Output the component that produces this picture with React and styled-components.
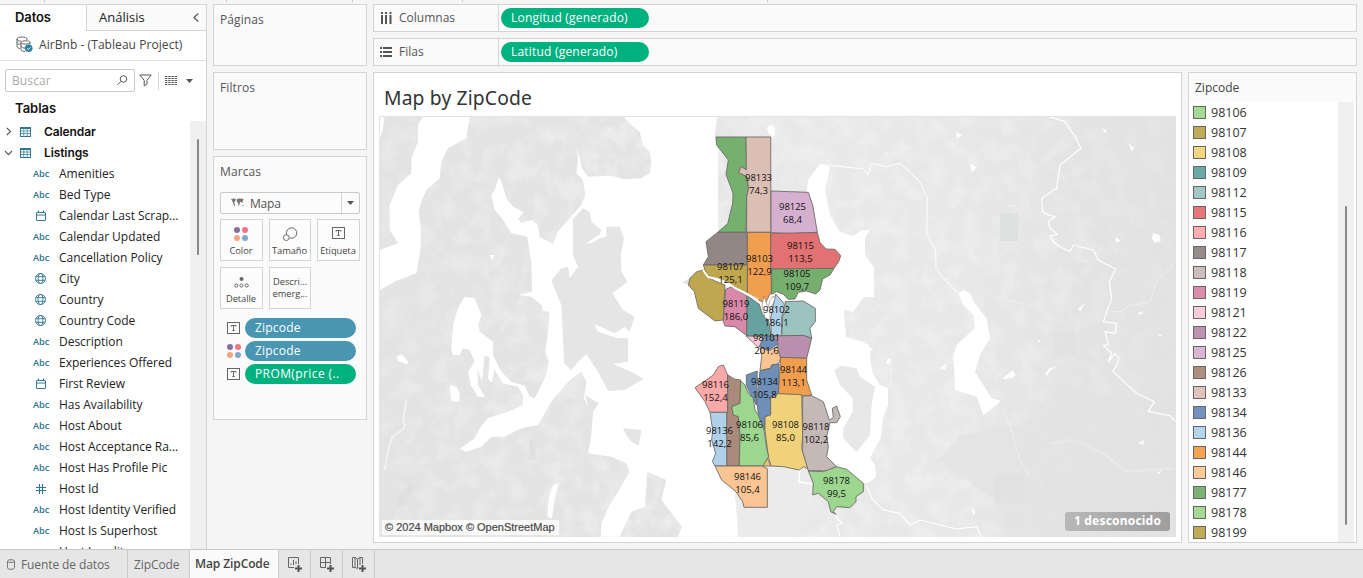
import React from 'react';
import styled, { createGlobalStyle, css } from 'styled-components';

const Global = createGlobalStyle`
  * { box-sizing: border-box; }
  html, body { margin: 0; padding: 0; overflow: hidden; }
  body { font-family: "Open Sans", "Noto Sans", sans-serif; font-size: 12px; color: #333; background: #f5f5f5; }
  svg { display: block; flex: none; }
`;

const LINE = '#d4d4d4';

const Window = styled.div`
  width: 1363px; height: 578px; display: flex; flex-direction: column;
  background: #f5f5f5; overflow: hidden; white-space: nowrap;
`;
const TopStrip = styled.div`
  height: 4px; flex: none; display: flex;
`;
const StripTick = styled.i`
  width: 1px; height: 2px; background: #ccc; margin-left: ${p => p.$gap}px;
`;
const Workspace = styled.div`
  flex: 1; min-height: 0; display: flex;
`;

/* data pane */
const DataPane = styled.aside`
  width: 207px; flex: none; background: #fff; display: flex; flex-direction: column;
  border-top: 1px solid ${LINE}; border-right: 1px solid ${LINE}; overflow: hidden;
`;
const PaneTabs = styled.div`height: 26px; flex: none; display: flex;`;
const PaneTab = styled.div`
  line-height: 25px; font-size: 13px;
  ${p => p.$active ? css`
    width: 86px; padding-left: 15px; font-family: Inter, sans-serif; font-weight: 600; color: #111; letter-spacing: -0.1px;
  ` : css`
    flex: 1; padding: 0 7px 0 12px; background: #fafafa; border-left: 1px solid ${LINE};
    border-bottom: 1px solid ${LINE}; display: flex; justify-content: space-between; align-items: center; color: #222;
  `}
`;
const Source = styled.div`
  height: 30px; flex: none; border-bottom: 1px solid #e2e2e2; display: flex; align-items: center;
  gap: 6px; padding: 0 0 2px 16px; font-size: 12px; color: #444; letter-spacing: 0.06px;
`;
const SearchRow = styled.div`
  height: 39px; flex: none; display: flex; align-items: center; padding: 0 0 0 5px;
`;
const SearchBox = styled.div`
  width: 130px; height: 23px; border: 1px solid #c9c9c9; border-radius: 2px; display: flex;
  align-items: center; justify-content: space-between; padding: 0 6px 0 6px; color: #aaa; font-size: 12px; letter-spacing: 0.1px;
`;
const Divider = styled.i`width: 1px; height: 18px; background: ${LINE}; margin: 0 6px;`;
const TablesTitle = styled.div`
  height: 21px; flex: none; padding-left: 15px; font: 600 13px/17px Inter, sans-serif; color: #111;
`;
const TreeArea = styled.div`flex: 1; min-height: 0; display: flex; overflow: hidden;`;
const Tree = styled.div`flex: 1; min-width: 0;`;
const TableRow = styled.div`
  height: 21px; display: flex; align-items: center; padding-left: 4px;
  font: 600 12px Inter, sans-serif; color: #111; letter-spacing: -0.1px;
`;
const Caret = styled.span`width: 16px; display: flex; flex: none;`;
const TableIconSlot = styled.span`width: 24px; display: flex; flex: none;`;
const FieldRow = styled.div`
  height: 21px; display: flex; align-items: center; color: #222; letter-spacing: -0.03px;
`;
const FieldIcon = styled.span`
  width: 59px; padding-left: 33px; flex: none; display: flex; color: #2f7691; letter-spacing: -0.1px;
  font: 600 9.3px "Open Sans", sans-serif;
`;
const Track = styled.div`
  width: ${p => p.$w}px; background: #f0f0f0; flex: none; display: flex; justify-content: center;
`;
const Thumb = styled.i`
  width: 2px; height: ${p => p.$h}px; margin-top: ${p => p.$top}px; background: #888; border-radius: 1px;
`;

/* cards */
const CardColumn = styled.div`
  width: 154px; margin-left: 6px; flex: none; display: flex; flex-direction: column; gap: 6px;
`;
const Card = styled.section`
  height: ${p => p.$h}px; border: 1px solid ${LINE}; background: #fafafa; padding: 0 6px; display: flex; flex-direction: column;
`;
const CardTitle = styled.div`line-height: 30px; height: 35px; flex: none; color: #555; font-size: 12px; letter-spacing: .1px;`;
const MarkSelect = styled.div`
  width: 140px; height: 22px; border: 1px solid #c9c9c9; border-radius: 2px; display: flex; align-items: center;
  color: #555; flex: none; padding-left: 10px; gap: 6px; background: #fcfcfc; letter-spacing: -0.2px;
`;
const SelectArrow = styled.span`
  margin-left: auto; width: 18px; height: 20px; border-left: 1px solid ${LINE}; display: flex; align-items: center; justify-content: center;
`;
const MarkGrid = styled.div`
  margin-top: 5px; display: grid; grid-template-columns: 43px 42px 43px; grid-auto-rows: 42px; gap: 6px; flex: none;
`;
const MarkButton = styled.div`
  border: 1px solid ${LINE}; background: #fcfcfc; color: #444; font-size: 9.3px; line-height: 12px; letter-spacing: -0.05px;
  display: flex; flex-direction: column; align-items: center; justify-content: ${p => p.$plain ? 'center' : 'space-between'};
  padding: ${p => p.$plain ? '0' : '7px 1px 3px 0'};
`;
const MarkPills = styled.div`display: flex; flex-direction: column; gap: 3px; padding: 9px 0 0 7px;`;
const MarkPillRow = styled.div`display: flex; align-items: center; gap: 4px; height: 20px;`;
const PillIcon = styled.span`width: 14px; display: flex; flex: none;`;
const Pill = styled.div`
  width: ${p => p.$w}px; height: 20px; border-radius: 10px; padding-left: 10px; line-height: 19px;
  background: ${p => p.$measure ? '#00b180' : '#4996b2'}; color: #fff; font-weight: 500; font-size: 12px; letter-spacing: ${p => p.$ls || 0.2}px;
`;

/* sheet */
const SheetArea = styled.main`
  width: 984px; margin-left: 6px; flex: none; display: flex; flex-direction: column; gap: 6px;
`;
const Shelf = styled.div`
  height: 28px; flex: none; border: 1px solid ${LINE}; background: #fafafa; display: flex; align-items: center;
`;
const ShelfLabel = styled.div`
  width: 125px; height: 26px; border-right: 1px solid ${LINE}; padding: 0 0 1px 6px; display: flex; align-items: center; gap: 6px;
  color: #555; margin-right: 2px; letter-spacing: 0;
`;
const ViewRow = styled.div`display: flex; gap: 6px; height: 471px; flex: none;`;
const View = styled.section`
  width: 809px; border: 1px solid ${LINE}; background: #fff; padding: 0 5px;
`;
const ViewTitle = styled.h1`
  margin: 0; height: 43px; padding-left: 5px; font: 400 19.3px/50px "Noto Sans", sans-serif; color: #333; letter-spacing: .15px;
`;
const MapBox = styled.div`width: 797px; height: 421px; position: relative; overflow: hidden;`;
const Attribution = styled.div`
  position: absolute; left: 3px; bottom: 2px; height: 15px; width: 177px; padding-left: 3px; background: rgba(255,255,255,.75);
  font: 400 11px/15px "Liberation Sans", Arial, sans-serif; color: #444; -webkit-text-stroke: .2px #555;
`;
const Unknown = styled.div`
  position: absolute; right: 6px; bottom: 6px; width: 105px; height: 19px; border-radius: 3px; text-align: center;
  background: linear-gradient(90deg, #b8b8b8, #9e9e9e); color: #fff; font: 700 12px/18px "Noto Sans", sans-serif; letter-spacing: .2px;
`;
const Legend = styled.section`
  width: 169px; border: 1px solid ${LINE}; background: #fafafa; display: flex; flex-direction: column;
`;
const LegendTitle = styled.div`height: 29px; flex: none; padding-left: 6px; line-height: 30px; color: #444;`;
const LegendBody = styled.div`flex: 1; display: flex; background: #fff; padding-right: 2px; min-height: 0;`;
const LegendList = styled.div`flex: 1;`;
const LegendItem = styled.div`
  height: 20px; display: flex; align-items: center; padding-left: 4px; gap: 5px; font-size: 12.5px; color: #333;
`;
const Swatch = styled.i`width: 13px; height: 13px; border: 1px solid #666; background: ${p => p.$c};`;

/* bottom tabs */
const SheetTabs = styled.footer`
  height: 29px; flex: none; border-top: 1px solid #c9c9c9; background: #e6e6e6; display: flex;
`;
const SheetTab = styled.div`
  width: ${p => p.$w}px; flex: none; border-right: 1px solid #c9c9c9; display: flex; align-items: center; padding: 1px 0 0 ${p => p.$pad}px;
  gap: 6px; color: #666; font-size: 12px; letter-spacing: -0.1px;
  ${p => p.$active && css`background: #fafafa; color: #444; font: 600 12px "Open Sans", sans-serif; padding-top: 0; padding-bottom: 2px;`}
`;

/* icons */
const Calendar = () => (
  <svg width="12" height="12" viewBox="0 0 12 12" style={{ marginLeft: 2 }} fill="none" stroke="#2f7691">
    <rect x="1.5" y="2.5" width="9" height="8" rx=".5" /><path d="M1.5 5H10.5M3.5 .5V3M8.5 .5V3" />
  </svg>
);
const Globe = () => (
  <svg width="13" height="13" viewBox="0 0 13 13" style={{ marginLeft: 1 }} fill="none" stroke="#2f7691" strokeWidth=".9">
    <circle cx="6.5" cy="6.5" r="5" /><ellipse cx="6.5" cy="6.5" rx="2.4" ry="5" /><path d="M1.9 4.7H11.1M1.9 8.3H11.1" />
  </svg>
);
const Hash = () => (
  <svg width="12" height="12" viewBox="0 0 12 12" style={{ marginLeft: 2 }} fill="none" stroke="#2f7691" strokeWidth="1.1">
    <path d="M4.5 1V11M7.5 1V11M1 4.5H11M1 7.5H11" />
  </svg>
);
const TableGlyph = () => (
  <svg width="11" height="10" viewBox="0 0 11 10" fill="none" stroke="#2f7691">
    <rect x=".5" y=".5" width="10" height="9" /><path d="M1 1.5H10" /><path d="M1 4H10M1 6.5H10M3.8 2V9.5M7.2 2V9.5" strokeWidth=".7" />
  </svg>
);
const LabelGlyph = () => (
  <svg width="13" height="12" viewBox="0 0 13 12" fill="none" stroke="#666">
    <rect x=".5" y=".5" width="12" height="11" /><path d="M4 4.6V3.5H9V4.6M6.5 3.5V8.5M5.3 8.5H7.7" />
  </svg>
);
const ColorGlyph = () => (
  <svg width="14" height="14" viewBox="0 0 14 14">
    <circle cx="3" cy="3" r="3" fill="#86709b" /><circle cx="11" cy="3" r="3" fill="#f77385" />
    <circle cx="3" cy="11" r="3" fill="#f5a77b" /><circle cx="11" cy="11" r="3" fill="#85a6cd" />
  </svg>
);
const SizeGlyph = () => (
  <svg width="16" height="15" viewBox="0 0 16 15" fill="none" stroke="#666">
    <path d="M4.600 7.500A5.200 5.200 0 1 1 7.800 10.900" /><circle cx="4.3" cy="10.6" r="2.9" />
  </svg>
);
const DetailGlyph = () => (
  <svg width="15" height="11" viewBox="0 0 15 11" fill="none" stroke="#666">
    <circle cx="7.5" cy="2" r="2" fill="#666" stroke="none" /><circle cx="2.3" cy="8.5" r="1.6" /><circle cx="7.5" cy="8.5" r="1.6" /><circle cx="12.7" cy="8.5" r="1.6" />
  </svg>
);
const WorldGlyph = () => (
  <svg width="13" height="10" viewBox="0 0 13 10" fill="#777">
    <path d="M0 1L3 .5 5 1 4 3.5 3 4.500 4 6 3.2 9 2.500 6 1.500 3.500ZM6 1L8 .5 12.5 .8 12 3 11 5 10 4 9 4 8.5 6.500 7.5 8 7 5 5.7 3.5ZM11 7l1.500 0-.5 1.500z" />
  </svg>
);
const DownArrow = ({ w = 7 }) => <svg width={w} height="4" viewBox="0 0 7 4"><path d="M0 0H7L3.5 4Z" fill="#555" /></svg>;
const SourceGlyph = () => (
  <svg width="17" height="17" viewBox="0 0 17 17" fill="none" stroke="#555" strokeWidth=".9">
    <path d="M4 12.5C2 12 1 11.5 1 10.5V3M1 3C1 .3 11 .3 11 3V4M1 3C1 5 4 5.3 5 5M1 6.5C1.5 8 3 8.3 5 8.3M9 15.5C6.5 15.5 5 15 5 13.5V6.5C5 4.2 14 4.2 14 6.5V8.5M5 6.5C5 8.6 14 8.6 14 6.5M5 10C5.5 11.5 7 12 9 12" />
    <circle cx="12.7" cy="12.3" r="3.8" fill="#2f7fa3" stroke="none" /><path d="M11 12.4L12.3 13.6 14.6 11.2" stroke="#fff" />
  </svg>
);
const PlusGlyph = <path d="M11.5 9V16M8 12.5H15" stroke="#555" strokeWidth="2" />;
const NewSheet = () => (
  <svg width="16" height="17" viewBox="0 0 16 17" fill="none" stroke="#666">
    <path d="M7 11.5H1.5V1.5H11.5V8M4 9V7.5M6.5 9V4M9 8V5.5" />{PlusGlyph}
  </svg>
);
const NewDash = () => (
  <svg width="16" height="17" viewBox="0 0 16 17" fill="none" stroke="#666">
    <path d="M7 11.5H1.5V1.5H11.5V8M6.500 1.5V11M1.5 6.5H11.5" />{PlusGlyph}
  </svg>
);
const NewStory = () => (
  <svg width="16" height="17" viewBox="0 0 16 17" fill="none" stroke="#666">
    <path d="M7 11.5L6.5 12.5 4 11.5H1.500V1.500H4L6.5 3 9 1.500H11.500V8M4 1.500V11M6.5 3V12M9 1.500V9" />{PlusGlyph}
  </svg>
);

/* map data: polygon outlines, one unit is a third of a pixel */
const north = [
  ['#76b06f', '168,36 258,36 260,135 243,124 237,142 261,155 265,190 260,215 258,322 173,322 203,296 218,235 219,205 198,148 205,105 170,60'],
  ['#dcbfb4', '258,36 332,36 333,322 260,322 260,215 266,190 261,155 236,143 243,124 259,135'],
  ['#d6b1cf', '333,198 445,202 458,240 472,322 395,326 333,323'],
  ['#928785', '173,322 262,322 262,420 130,420 145,395 138,350'],
  ['#f19f4e', '262,322 332,322 334,500 316,535 290,522 262,508'],
  ['#e27173', '332,325 472,323 480,352 498,372 525,373 542,392 536,410 522,430 440,433 332,432'],
  ['#76ae6d', '335,432 522,430 510,450 488,462 480,495 467,507 440,498 415,502 405,522 385,523 370,508 350,500 335,508'],
  ['#bfa750', '130,420 262,420 262,508 230,490 200,470 160,460 140,450'],
  ['#bfa750', '110,440 132,435 140,455 165,468 195,480 190,585 165,588 115,550 103,500 85,480 90,460'],
  ['#da88aa', '197,493 215,485 260,512 260,632 225,605 195,603 190,590'],
  ['#66a3a0', '262,512 298,538 308,570 325,580 333,632 260,632'],
  ['#b0d1ea', '347,507 372,535 375,550 365,575 365,632 334,632 332,580'],
  ['#9bc4c0', '375,530 430,528 466,550 466,590 450,610 455,640 430,632 365,632 368,575 380,550'],
];
const south = [
  ['#f9c7d6', '258,48 305,50 312,66 295,82'],
  ['#6d8fb8', '312,48 345,50 355,72 325,90 298,80'],
  ['#ba8fae', '335,48 430,46 455,55 440,115 360,112 352,80 355,70'],
  ['#f9c592', '300,83 325,92 352,80 362,115 355,132 335,135 332,145 300,152 305,110'],
  ['#f19f4e', '362,112 440,115 440,180 455,225 430,228 355,222'],
  ['#6d8fb8', '259,165 292,153 289,255 270,220 259,195'],
  ['#6d8fb8', '300,152 332,145 335,135 357,132 355,222 335,235 332,285 315,290 315,330 295,285 290,240'],
  ['#f0d27a', '355,221 425,224 428,350 425,385 445,447 430,440 418,450 370,440 333,438 325,410 315,330 315,290 332,285 332,235'],
  ['#e9c46c', '305,438 322,415 333,438'],
  ['#c4b9b7', '428,228 455,227 490,245 508,300 520,293 517,265 530,258 541,290 530,308 510,308 500,350 505,380 500,410 530,440 500,453 445,452 428,395'],
  ['#9dd68f', '445,453 490,455 530,440 560,448 610,490 610,515 588,530 588,545 570,563 530,560 520,575 528,583 512,575 505,545 475,520 458,525 460,490'],
  ['#faa8a8', '105,203 160,165 175,140 190,135 203,165 203,277 150,277 135,245'],
  ['#aa8a7a', '203,165 225,178 242,180 240,250 215,260 220,285 235,290 240,345 238,438 200,438 200,277 203,277'],
  ['#9dd68f', '242,183 255,195 265,220 280,235 285,270 295,285 312,330 320,385 326,410 308,438 238,438 240,345 235,290 220,285 215,260 240,250'],
  ['#b0d1ea', '150,277 200,277 200,438 165,438 157,425 167,400 155,360 158,330'],
  ['#fac592', '165,438 305,438 322,446 322,562 252,562 248,545 228,515 185,480'],
];
const labels = [
  [758.5, 181, '98133', '74,3'], [792.5, 210, '98125', '68,4'], [800.5, 249, '98115', '113,5'], [759.5, 262, '98103', '122,9'],
  [730.5, 270, '98107', '125,1'], [797, 277, '98105', '109,7'], [736, 307, '98119', '186,0'], [776.5, 313, '98102', '186,1'],
  [766.5, 341, '98101', '201,6'], [793.5, 373, '98144', '113,1'], [764.5, 385, '98134', '105,8'], [715.5, 388, '98116', '152,4'],
  [719.5, 434, '98136', '142,2'], [749.5, 428, '98106', '85,6'], [785.5, 428, '98108', '85,0'], [816, 430, '98118', '102,2'],
  [747.5, 480, '98146', '105,4'], [836.5, 484, '98178', '99,5'],
];

const MapDrawing = () => (
  <svg width="797" height="421" viewBox="379 116 797 421">
    <defs>
      <filter id="mottle" x="0" y="0" width="100%" height="100%" colorInterpolationFilters="sRGB">
        <feTurbulence type="fractalNoise" baseFrequency="0.055" numOctaves="3" seed="4" />
        <feColorMatrix values="0 0 0 0 .935  0 0 0 0 .935  0 0 0 0 .935  3 0 0 0 -1.2" />
      </filter>
      <linearGradient id="land" x1="0" x2="1" y1="0" y2="0">
        <stop offset="0" stopColor="#e3e3e3" /><stop offset=".4" stopColor="#e4e4e4" /><stop offset=".45" stopColor="#e9e9e9" />
        <stop offset=".72" stopColor="#e8e8e8" /><stop offset=".9" stopColor="#e3e3e3" /><stop offset="1" stopColor="#e2e2e2" />
      </linearGradient>
      <linearGradient id="shade" x1="0" x2="1" y1="0" y2="0">
        <stop offset="0" stopColor="#fff" stopOpacity=".45" /><stop offset=".25" stopColor="#fff" stopOpacity=".7" /><stop offset=".45" stopColor="#fff" stopOpacity=".9" />
        <stop offset=".7" stopColor="#fff" stopOpacity=".8" /><stop offset="1" stopColor="#fff" stopOpacity=".2" />
      </linearGradient>
      <mask id="fade"><rect x="379" y="116" width="797" height="421" fill="url(#shade)" /></mask>
    </defs>
    <rect x="379" y="116" width="797" height="421" fill="url(#land)" />
    <g mask="url(#fade)"><rect x="379" y="116" width="797" height="421" filter="url(#mottle)" /></g>
    <path d="M930 470L960 435 1020 425 1060 385 1110 395 1176 440V537H1010L995 500 940 460Z" fill="#e2e2e2" opacity=".7" />
    <path d="M1000 213h18v28h-18z" fill="#dcdede" opacity=".8" />
    <path d="M1053 333h22v24h-22zM994 475h30v28h-30z" fill="#dfdfdf" opacity=".6" />

    <g transform="translate(378 115) scale(.33333)" fill="#fff">
      <path d="M135 4H275L265 70 210 100 190 140 185 190 145 225 130 260 122 290 128 340 128 400 115 475 60 495 5 525V405L60 385 35 345V270L60 210 100 175V130L120 80 120 30Z" />
      <path d="M735 4L760 30 785 50 795 90 815 110 820 140 815 175 790 190 740 193 700 182 630 185 612 160 603 120 597 97 600 135 595 175 615 195 622 240 610 270 575 310 540 350 525 388 485 365 480 330 460 315 430 325 420 310 438 292 405 275 385 250 372 205 363 185 350 225 340 240 350 285 372 310 400 355 448 365 460 440 462 530 422 540 460 545 490 570 495 588 515 590 510 650 502 710 512 740 505 780 470 850 455 845 440 812 400 800 370 770 345 720 345 680 305 650 300 630 310 600 290 550 260 545 240 580 225 630 220 700 225 720 245 720 255 700 275 705 290 740 270 770 278 810 300 845 322 847 300 810 298 760 312 800 320 720 335 730 330 790 340 805 350 765 375 805 420 815 435 840 435 870 390 890 330 910 305 940 290 970 245 1002 265 1010 310 995 340 965 380 965 430 940 480 930 520 860 570 800 610 770 625 800 618 850 630 880 622 840 662 865 645 890 640 960 630 1015 700 1025 745 1045 755 1070 720 1130 695 1170 670 1225 668 1265H725L760 1190 800 1175 808 1070 865 1095 850 1155 885 1200 912 1235 900 1265H1082L1078 1215 1097 1180 1200 1055 1400 1055 1420 960 1260 600 1160 345 1020 345 1020 100 1010 60 1018 4Z" />
      <path d="M215 810L235 815 245 835 243 860 220 858ZM55 725L72 718 92 742 85 748 60 738ZM525 1110L542 1105 530 1150 522 1210 508 1205 512 1150ZM335 420l15 0-8 18zM568 650l10 2-3 8zM5 4h15l-6 40-9 30z" />
      <path d="M82 925l-4 15-35 25-15 50-8 50M85 855l-10 70" fill="none" stroke="#f4f4f4" strokeWidth="5" />
    </g>
    <g transform="translate(378 115) scale(.33333)" fill="#e5e5e5">
      <path d="M585 312L615 280 635 290 640 320 670 345 665 358 625 385 640 385 665 370 685 365 685 335 725 335 738 370 728 420 730 470 748 500 703 535 735 585 770 605 755 650 740 635 710 655 650 628 660 650 720 670 750 670 750 740 705 747 760 770 797 792 740 825 690 828 660 770 625 718 600 740 580 765 558 745 555 660 550 570 520 497 550 460 570 455 575 490 600 455 585 420Z" />
      <path d="M735 940L790 945 782 993 760 980 748 965ZM912 502l25-14v26z" />
      <path d="M100 1105l8 15-30 50-25 5 10-30zM455 975h18v60h-22z" fill="#dddddd" opacity=".8" />
    </g>
    <path d="M820 164L808 180 806 195 700 240 720 330 757 360 765 400 800 460 837 469 863 483 868 483 876 477 875 465 870 458 881 437 883 418 888 405V388L880 385 872 372 869 345 860 341 846 337 844 310 853 312 864 297H874L874 268 865 255V238L870 230 862 230 853 236 840 232 830 215 825 190 830 167Z" fill="#fff" />
    <g transform="translate(820 115) scale(.33333)">
      <path d="M42 765L65 752 110 760 120 785 165 815 155 870 150 960 110 1012 70 970 70 940 98 890 98 850 60 810Z" fill="#e8e8e8" />
      <path d="M415 535L430 525 450 535 460 560 500 610 510 670 480 720 465 770 515 850 543 858 510 885 490 900 470 845 405 825 400 720 410 690 465 640 460 600 430 570Z" fill="#fff" />
      <path d="M120 676L160 705 140 710ZM205 730L215 735 205 750 198 745ZM408 50l18 10-14 12zM450 145l20 12-15 16zM925 85l18 14-8 10zM1000 355l18 5 5 18-18 6-10-14zM885 365l16 12-12 8zM795 565l-15 25-5-10zM380 745l-5 20-18-5zM560 268l24 4 0 3zM548 790l30-25 10 15-10 8-25 5zM675 778l12-18 22-6-18 14-10 14zM955 985l16-10 0 14zM1010 1075l16-10-8 12zM845 38l15 10-5 6zM455 1175l12 15-8 12zM650 680l10-6 0 8zM950 595l22-6-10 10zM205 108l-8 14 3-12zM1010 655l16 5-5 5z" fill="#fff" opacity=".9" />
      <g fill="none" stroke="#fff">
        <path d="M0 148L40 152 130 162 145 180 155 145 200 155 240 145 300 200 322 250 320 355 347 405 348 460 370 490 415 535" strokeWidth="3" />
        <path d="M685 4L735 20 765 65 783 100 720 150 710 220 665 250 668 290 680 298 705 305 685 320 690 340 712 358 690 362 700 380 720 395 750 410 760 390 820 405 835 435 887 462 868 500 875 550 850 620 890 625 885 655 855 650 865 690 850 690 875 715 865 740 885 715 897 730 890 752 878 768 950 835 1003 860 985 890 1050 902 1065 918" strokeWidth="3.6" strokeLinejoin="round" />
        <path d="M870 590L905 590 920 575 990 560 1010 500 1050 460 1063 440M205 730L215 760 210 820M550 880L575 950 600 1035 628 1080M770 430L800 442" strokeWidth="2" opacity=".6" />
        <path d="M140 1110L155 1150 190 1185 240 1195 270 1230 300 1215 410 1242 470 1235 485 1265M45 1200L65 1225 50 1230 60 1265M-23 1025L-20 1050 0 1055" strokeWidth="3.4" />
        <path d="M690 985L760 975 850 1015 920 1070 1065 1060M500 540L650 575 720 620" stroke="#eee" strokeWidth="8" opacity=".5" />
      </g>
    </g>
    <path d="M769 134q-4-6 1-9l4 1q2 7 0 11zM746 526l7 1-2 3-6-1z" fill="#fff" />
    <path d="M733 474L770 465 812 470 815 500 790 537H738L737 518Z" fill="#ebebeb" />
    <path d="M800 467L799 482 812 484" fill="none" stroke="#fff" strokeWidth="1.5" />
    <g stroke="#6b6864" strokeWidth="2.6" strokeLinejoin="round">
      <g transform="translate(660 125) scale(.33333)">{north.map(([c, p], i) => <polygon key={i} fill={c} points={p} />)}</g>
      <path d="M764 296L768 308 770 300 773 296 775 299 770 310V320L765 318 762 305Z" fill="#fff" strokeWidth=".5" />
      <path d="M703 270L708 277 717 279 728 283 735 288 745 293 758 300" fill="none" stroke="#fff" strokeWidth="2" />
      <g transform="translate(660 320) scale(.33333)">{south.map(([c, p], i) => <polygon key={i} fill={c} points={p} />)}</g>
    </g>
    <g fontFamily="'Open Sans', sans-serif" fontSize="9.6" fill="#111" textAnchor="middle">
      {labels.map(([x, y, a, b], i) => (
        <React.Fragment key={i}>
          <text x={x} y={y} textLength="27" lengthAdjust="spacingAndGlyphs">{a}</text>
          <text x={x} y={y + 13}>{b}</text>
        </React.Fragment>
      ))}
    </g>
    <path d="M379 116.5H1176M379.5 116V537" stroke="#e3e3e3" fill="none" />
  </svg>
);

const fields = [
  ['abc', 'Amenities'], ['abc', 'Bed Type'], ['cal', 'Calendar Last Scrap...'], ['abc', 'Calendar Updated'], ['abc', 'Cancellation Policy'],
  ['geo', 'City'], ['geo', 'Country'], ['geo', 'Country Code'], ['abc', 'Description'], ['abc', 'Experiences Offered'],
  ['cal', 'First Review'], ['abc', 'Has Availability'], ['abc', 'Host About'], ['abc', 'Host Acceptance Ra...'],
  ['abc', 'Host Has Profile Pic'], ['num', 'Host Id'], ['abc', 'Host Identity Verified'], ['abc', 'Host Is Superhost'], ['', 'Host Locality'],
];
const fieldIcons = { abc: 'Abc', cal: <Calendar />, geo: <Globe />, num: <Hash /> };

const legend = [
  ['98106', '#a2da94'], ['98107', '#c2ab56'], ['98108', '#f3d780'], ['98109', '#6caaa7'], ['98112', '#a0c8c4'], ['98115', '#e67678'],
  ['98116', '#ffadae'], ['98117', '#968c8a'], ['98118', '#c9bebc'], ['98119', '#dd8cae'], ['98121', '#fccada'], ['98122', '#c093b2'],
  ['98125', '#dab5d4'], ['98126', '#b08f7f'], ['98133', '#e1c4b9'], ['98134', '#7192bc'], ['98136', '#b4d5ee'], ['98144', '#f5a254'],
  ['98146', '#ffca96'], ['98177', '#7ab373'], ['98178', '#a2da94'], ['98199', '#c2ab56'],
];

export default function App() {
  return (
    <Window>
      <Global />
      <TopStrip><StripTick $gap={44} /><StripTick $gap={181} /><StripTick $gap={125} /><StripTick $gap={109} /><StripTick $gap={304} /></TopStrip>
      <Workspace>
        <DataPane>
          <PaneTabs>
            <PaneTab $active>Datos</PaneTab>
            <PaneTab>Análisis<svg width="6" height="9" viewBox="0 0 6 9" fill="none" stroke="#555" strokeWidth="1.2"><path d="M5.3 .5L1 4.5 5.3 8.5" /></svg></PaneTab>
          </PaneTabs>
          <Source><SourceGlyph />AirBnb - (Tableau Project)</Source>
          <SearchRow>
            <SearchBox>Buscar<svg width="11" height="11" viewBox="0 0 11 11" fill="none" stroke="#555"><circle cx="6.5" cy="4" r="3.3" /><path d="M4 6.3L.5 9.8" /></svg></SearchBox>
            <svg width="13" height="13" viewBox="0 0 13 13" fill="none" stroke="#555" style={{ marginLeft: 4 }}><path d="M.8 1H12.2L8 6.3V10L5.2 12V6.3Z" /></svg>
            <Divider />
            <svg width="12" height="9" viewBox="0 0 12 9" stroke="#555" strokeWidth="1"><path d="M0 .5H12M0 2.5H12M0 4.5H12M0 6.5H12M0 8.5H12" strokeDasharray="2.4 .8" /></svg>
            <span style={{ marginLeft: 9 }}><DownArrow /></span>
          </SearchRow>
          <TablesTitle>Tablas</TablesTitle>
          <TreeArea>
            <Tree>
              <TableRow><Caret><svg width="9" height="9" viewBox="0 0 9 9" fill="none" stroke="#555" strokeWidth="1.1"><path d="M2.8 1L6.6 4.5 2.8 8" /></svg></Caret><TableIconSlot><TableGlyph /></TableIconSlot>Calendar</TableRow>
              <TableRow><Caret><svg width="9" height="9" viewBox="0 0 9 9" fill="none" stroke="#555" strokeWidth="1.1"><path d="M1 3L4.5 6.6 8 3" /></svg></Caret><TableIconSlot><TableGlyph /></TableIconSlot>Listings</TableRow>
              {fields.map(([k, t]) => <FieldRow key={t}><FieldIcon>{fieldIcons[k]}</FieldIcon>{t}</FieldRow>)}
            </Tree>
            <Track $w={16}><Thumb $top={18} $h={116} /></Track>
          </TreeArea>
        </DataPane>

        <CardColumn>
          <Card $h={62}><CardTitle>Páginas</CardTitle></Card>
          <Card $h={78}><CardTitle>Filtros</CardTitle></Card>
          <Card $h={264}>
            <CardTitle>Marcas</CardTitle>
            <MarkSelect><WorldGlyph />Mapa<SelectArrow><DownArrow /></SelectArrow></MarkSelect>
            <MarkGrid>
              <MarkButton><ColorGlyph />Color</MarkButton>
              <MarkButton><SizeGlyph />Tamaño</MarkButton>
              <MarkButton><LabelGlyph />Etiqueta</MarkButton>
              <MarkButton><span style={{ marginTop: 2 }}><DetailGlyph /></span>Detalle</MarkButton>
              <MarkButton $plain><span>Descri...</span><span>emerg...</span></MarkButton>
            </MarkGrid>
            <MarkPills>
              <MarkPillRow><PillIcon><LabelGlyph /></PillIcon><Pill $w={111}>Zipcode</Pill></MarkPillRow>
              <MarkPillRow><PillIcon><ColorGlyph /></PillIcon><Pill $w={111}>Zipcode</Pill></MarkPillRow>
              <MarkPillRow><PillIcon><LabelGlyph /></PillIcon><Pill $w={111} $measure $ls={0.4}>PROM(price (..</Pill></MarkPillRow>
            </MarkPills>
          </Card>
        </CardColumn>

        <SheetArea>
          <Shelf>
            <ShelfLabel><svg width="13" height="12" viewBox="0 0 13 12" fill="#555"><path d="M1 0h2v2H1zM5 0h2v2H5zM9.500 0h2v2h-2zM1 3h2v9H1zM5 3h2v9H5zM9.500 3h2v9h-2z" /></svg>Columnas</ShelfLabel>
            <Pill $w={148} $measure>Longitud (generado)</Pill>
          </Shelf>
          <Shelf>
            <ShelfLabel><svg width="13" height="10" viewBox="0 0 13 10" fill="#555"><path d="M0 0h2v2H0zM0 4h2v2H0zM0 8h2v2H0zM3 0h9v2H3zM3 4h9v2H3zM3 8h9v2H3z" /></svg>Filas</ShelfLabel>
            <Pill $w={148} $measure>Latitud (generado)</Pill>
          </Shelf>
          <ViewRow>
            <View>
              <ViewTitle>Map by ZipCode</ViewTitle>
              <MapBox>
                <MapDrawing />
                <Attribution>© 2024 Mapbox © OpenStreetMap</Attribution>
                <Unknown>1 desconocido</Unknown>
              </MapBox>
            </View>
            <Legend>
              <LegendTitle>Zipcode</LegendTitle>
              <LegendBody>
                <LegendList>{legend.map(([n, c]) => <LegendItem key={n}><Swatch $c={c} />{n}</LegendItem>)}</LegendList>
                <Track $w={16}><Thumb $top={104} $h={319} /></Track>
              </LegendBody>
            </Legend>
          </ViewRow>
        </SheetArea>
      </Workspace>
      <SheetTabs>
        <SheetTab $w={128} $pad={7}><svg width="8" height="11" viewBox="0 0 9 12" fill="none" stroke="#666"><path d="M.5 2.500V9.500C.5 12 8.500 12 8.500 9.500V2.500C8.500 0 .5 0 .5 2.500C.5 4 8.500 4 8.500 2.500" /></svg>Fuente de datos</SheetTab>
        <SheetTab $w={62} $pad={6}>ZipCode</SheetTab>
        <SheetTab $w={89} $pad={5} $active>Map ZipCode</SheetTab>
        <SheetTab $w={32} $pad={8}><NewSheet /></SheetTab>
        <SheetTab $w={32} $pad={8}><NewDash /></SheetTab>
        <SheetTab $w={32} $pad={8}><NewStory /></SheetTab>
      </SheetTabs>
    </Window>
  );
}
